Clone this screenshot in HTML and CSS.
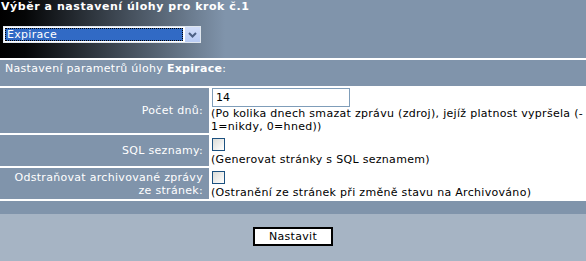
FILE: index.html
```html
<!DOCTYPE html>
<html lang="cs">
<head>
    <meta charset="UTF-8">
    <title>Výběr a nastavení úlohy</title>
    <link rel="stylesheet" href="styles.css">
</head>
<body>
    <div class="header">
        <h1>Výběr a nastavení úlohy pro krok č.1</h1>
        <div class="select">
            <div class="select-value">Expirace</div>
            <div class="select-btn">
                <svg width="9" height="6" viewBox="0 0 9 6">
                    <path d="M1 1 L4.5 4.5 L8 1" fill="none" stroke="#4d6185" stroke-width="2"/>
                </svg>
            </div>
        </div>
    </div>

    <div class="params">
        <div class="params-title">Nastavení parametrů úlohy <b>Expirace</b>:</div>

        <div class="label">Počet dnů:</div>
        <div class="value">
            <input type="text" class="text-input" value="14">
            <div class="note">(Po kolika dnech smazat zprávu (zdroj), jejíž platnost vypršela (-<wbr>1=nikdy, 0=hned))</div>
        </div>

        <div class="label">SQL seznamy:</div>
        <div class="value">
            <input type="checkbox" class="check">
            <div class="note">(Generovat stránky s SQL seznamem)</div>
        </div>

        <div class="label">Odstraňovat archivované zprávy ze stránek:</div>
        <div class="value">
            <input type="checkbox" class="check">
            <div class="note">(Ostranění ze stránek při změně stavu na Archivováno)</div>
        </div>
    </div>

    <div class="strip"></div>
    <div class="footer">
        <button class="submit">Nastavit</button>
    </div>
</body>
</html>
```

FILE: styles.css
```css
body {
    margin: 0;
    font-family: "DejaVu Sans", Verdana, sans-serif;
    font-size: 11px;
    line-height: 13px;
    letter-spacing: 0.3px;
    background-color: #a6b4c4;
    -webkit-font-smoothing: none;
}
.header {
    height: 58px;
    background: linear-gradient(90deg, #000 0px, #050607 25px, #8094ab 225px);
    color: #fff;
}
.header h1 {
    margin: 0;
    padding: 0 0 0 1px;
    font-size: 11px;
    line-height: 13px;
    font-weight: bold;
    letter-spacing: 0.55px;
}
.select {
    margin: 13px 0 0 3px;
    width: 196px;
    height: 15px;
    border: 1px solid #dfe6ee;
    background-color: #fff;
    display: flex;
}
.select-value {
    flex: 1;
    margin: 1px;
    padding-left: 2px;
    background-color: #316ac5;
    color: #fff;
    outline: 1px dotted #000;
    outline-offset: -1px;
    line-height: 13px;
}
.select-btn {
    width: 15px;
    background: linear-gradient(#d2def9, #b8cbf4);
    border-left: 1px solid #fff;
    display: flex;
    align-items: center;
    justify-content: center;
}
.params {
    display: grid;
    grid-template-columns: 209px 1fr;
    gap: 2px;
    padding: 2px 0;
    background-color: #fff;
}
.params-title {
    grid-column: 1 / 3;
    height: 24px;
    padding: 2px 5px 0;
    background-color: #8094ab;
    color: #fff;
}
.label {
    background-color: #8094ab;
    color: #fff;
    text-align: right;
    padding: 0 6px 0 4px;
    display: flex;
    align-items: center;
    justify-content: flex-end;
}
.value {
    color: #000;
}
.text-input {
    display: block;
    box-sizing: border-box;
    width: 138px;
    height: 19px;
    margin: 0 0 0 1px;
    padding: 0 3px;
    border: 1px solid #7f9db9;
    font-family: inherit;
    font-size: 11px;
}
.check {
    -webkit-appearance: none;
    appearance: none;
    display: block;
    width: 13px;
    height: 13px;
    margin: 3px 0 2px 1px;
    border: 1px solid #1c5180;
    background: linear-gradient(135deg, #dcdcd7, #fff);
}
.strip {
    height: 13px;
    background-color: #8094ab;
}
.footer {
    padding-top: 13px;
    display: flex;
    justify-content: center;
}
.submit {
    width: 80px;
    height: 19px;
    padding: 0;
    border: 2px solid #000;
    background-color: #fff;
    font-family: inherit;
    font-size: 11px;
    letter-spacing: inherit;
    color: #000;
}
```
